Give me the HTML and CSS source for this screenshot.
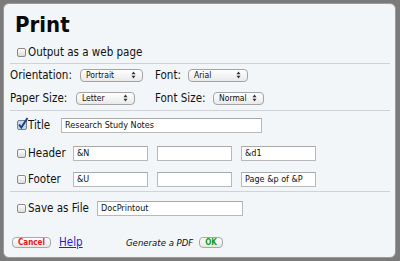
FILE: index.html
```html
<!DOCTYPE html>
<html lang="en">
<head>
  <meta charset="UTF-8" />
  <title>Print</title>
  <link rel="stylesheet" href="styles.css">
</head>
<body>
  <div class="dialog">
    <h1 class="title">Print</h1>

    <div class="row row-web">
      <span class="cb"></span><span class="lbl">Output as a web page</span>
    </div>

    <div class="rule rule-top"></div>

    <div class="row row-orient">
      <span class="opt w-orient">Orientation:</span>
      <div class="select w-portrait"><span>Portrait</span><svg width="5" height="8" viewBox="0 0 5 8"><path d="M0.5 3.2 L2.5 0.5 L4.5 3.2 Z M0.5 4.8 L2.5 7.5 L4.5 4.8 Z" fill="#333"/></svg></div>
      <span class="opt w-font">Font:</span>
      <div class="select w-arial"><span>Arial</span><svg width="5" height="8" viewBox="0 0 5 8"><path d="M0.5 3.2 L2.5 0.5 L4.5 3.2 Z M0.5 4.8 L2.5 7.5 L4.5 4.8 Z" fill="#333"/></svg></div>
    </div>

    <div class="row row-paper">
      <span class="opt w-paper">Paper Size:</span>
      <div class="select w-letter"><span>Letter</span><svg width="5" height="8" viewBox="0 0 5 8"><path d="M0.5 3.2 L2.5 0.5 L4.5 3.2 Z M0.5 4.8 L2.5 7.5 L4.5 4.8 Z" fill="#333"/></svg></div>
      <span class="opt w-fontsize">Font Size:</span>
      <div class="select w-normal"><span>Normal</span><svg width="5" height="8" viewBox="0 0 5 8"><path d="M0.5 3.2 L2.5 0.5 L4.5 3.2 Z M0.5 4.8 L2.5 7.5 L4.5 4.8 Z" fill="#333"/></svg></div>
    </div>

    <div class="rule rule-mid"></div>

    <div class="row row-field row-title">
      <span class="cb checked"><svg width="12" height="13" viewBox="0 0 12 13"><rect x="0.5" y="3.5" width="9" height="9" rx="1.5" fill="#c9d6e6" stroke="#6f82a0"/><path d="M2 7.5 L4.3 10.5 L10.5 1" fill="none" stroke="#1f3f82" stroke-width="1.9"/></svg></span>
      <span class="lbl w-title">Title</span>
      <input class="field w-long" type="text" value="Research Study Notes">
    </div>

    <div class="row row-field row-header">
      <span class="cb"></span>
      <span class="lbl w-hf">Header</span>
      <div class="fields">
        <input class="field w-short" type="text" value="&amp;N">
        <input class="field w-short" type="text" value="">
        <input class="field w-short" type="text" value="&amp;d1">
      </div>
    </div>

    <div class="row row-field row-footer">
      <span class="cb"></span>
      <span class="lbl w-hf">Footer</span>
      <div class="fields">
        <input class="field w-short" type="text" value="&amp;U">
        <input class="field w-short" type="text" value="">
        <input class="field w-short" type="text" value="Page &amp;p of &amp;P">
      </div>
    </div>

    <div class="rule rule-low"></div>

    <div class="row row-field row-save">
      <span class="cb"></span>
      <span class="lbl w-save">Save as File</span>
      <input class="field w-file" type="text" value="DocPrintout">
    </div>

    <div class="row row-actions">
      <button class="btn btn-cancel">Cancel</button>
      <a class="help" href="#">Help</a>
      <span class="pdf">Generate a PDF</span>
      <button class="btn btn-ok">OK</button>
    </div>
  </div>
</body>
</html>
```

FILE: styles.css
```css
body {
  margin: 0;
  padding: 3px;
  background: #7b7b7b;
  font-family: "DejaVu Sans Condensed", "DejaVu Sans", sans-serif;
  color: #111;
}

.dialog {
  box-sizing: border-box;
  width: 393px;
  height: 255px;
  background: #f3f6f9;
  border: 1px solid #9a9a9a;
  border-radius: 6px;
  padding: 7px 5px 0 6px;
}

.title {
  margin: 0 0 0 5px;
  font-size: 22px;
  line-height: 28px;
  font-weight: bold;
  color: #0a0a0a;
}

.row {
  display: flex;
  align-items: center;
}

.lbl {
  font-size: 11.5px;
  white-space: nowrap;
}

/* checkboxes */
.cb {
  box-sizing: border-box;
  width: 9px;
  height: 9px;
  margin-right: 2px;
  border: 1px solid #8a8a8a;
  border-radius: 2px;
  background: linear-gradient(#fdfdfd, #dcdcdc);
  flex: none;
}

.cb.checked {
  border: none;
  background: none;
  position: relative;
}

.cb.checked svg {
  position: absolute;
  left: 0;
  top: -4px;
}

.row-web {
  height: 14px;
  margin-top: 6px;
  padding-left: 7px;
}

.rule {
  border-top: 1px solid #cfd3d7;
}

.rule-top { margin-top: 4px; }
.rule-mid { margin-top: 5px; }
.rule-low { margin-top: 4px; }

/* option rows */
.opt {
  font-size: 11.5px;
  white-space: nowrap;
  flex: none;
}

.w-orient { width: 70px; }
.w-font { width: 33px; margin-left: 12px; }
.w-paper { width: 66px; }
.w-fontsize { width: 58px; margin-left: 20px; }

.select {
  box-sizing: border-box;
  height: 13px;
  display: flex;
  align-items: center;
  justify-content: space-between;
  padding: 0 6px 0 5px;
  border: 1px solid #a4a4a4;
  border-radius: 4px;
  background: linear-gradient(#ffffff, #e9e9e9);
  font-size: 8.5px;
  color: #111;
  flex: none;
}

.w-portrait { width: 63px; }
.w-arial { width: 60px; }
.w-letter { width: 59px; }
.w-normal { width: 51px; }

.row-orient {
  height: 14px;
  margin-top: 4px;
}

.row-paper {
  height: 14px;
  margin-top: 9px;
}

/* text field rows */
.row-field {
  height: 16px;
  padding-left: 7px;
}

.row-title { margin-top: 6px; }
.row-header { margin-top: 12px; }
.row-footer { margin-top: 10px; }
.row-save { margin-top: 8px; }

.w-title { width: 33px; }
.w-hf { width: 45px; }
.w-save { width: 69px; }

.fields {
  display: flex;
  gap: 9px;
}

.field {
  box-sizing: border-box;
  height: 15px;
  margin: 0;
  padding: 0 3px;
  border: 1px solid #b9b9b9;
  border-top-color: #a9a9a9;
  background: #fff;
  font-family: "DejaVu Sans Condensed", "DejaVu Sans", sans-serif;
  font-size: 9px;
  color: #111;
  outline: none;
}

.w-long { width: 201px; }
.w-short { width: 75px; }
.w-file { width: 146px; }

/* bottom actions */
.row-actions {
  height: 12px;
  margin-top: 20px;
  padding-left: 2px;
}

.btn {
  box-sizing: border-box;
  height: 11px;
  margin: 0;
  padding: 0;
  border: 1px solid #a8a8a8;
  border-radius: 4px;
  background: linear-gradient(#ffffff, #e6e6e6);
  font-family: "DejaVu Sans Condensed", "DejaVu Sans", sans-serif;
  font-size: 8px;
  font-weight: bold;
  line-height: 9px;
}

.btn-cancel {
  width: 39px;
  color: #e0141a;
}

.btn-ok {
  width: 24px;
  color: #159a22;
}

.help {
  width: 24px;
  margin-left: 8px;
  font-size: 11.5px;
  color: #2a1ccf;
  text-decoration: underline;
}

.pdf {
  width: 73px;
  margin-left: 43px;
  font-size: 9.5px;
  font-style: italic;
  white-space: nowrap;
}
```
